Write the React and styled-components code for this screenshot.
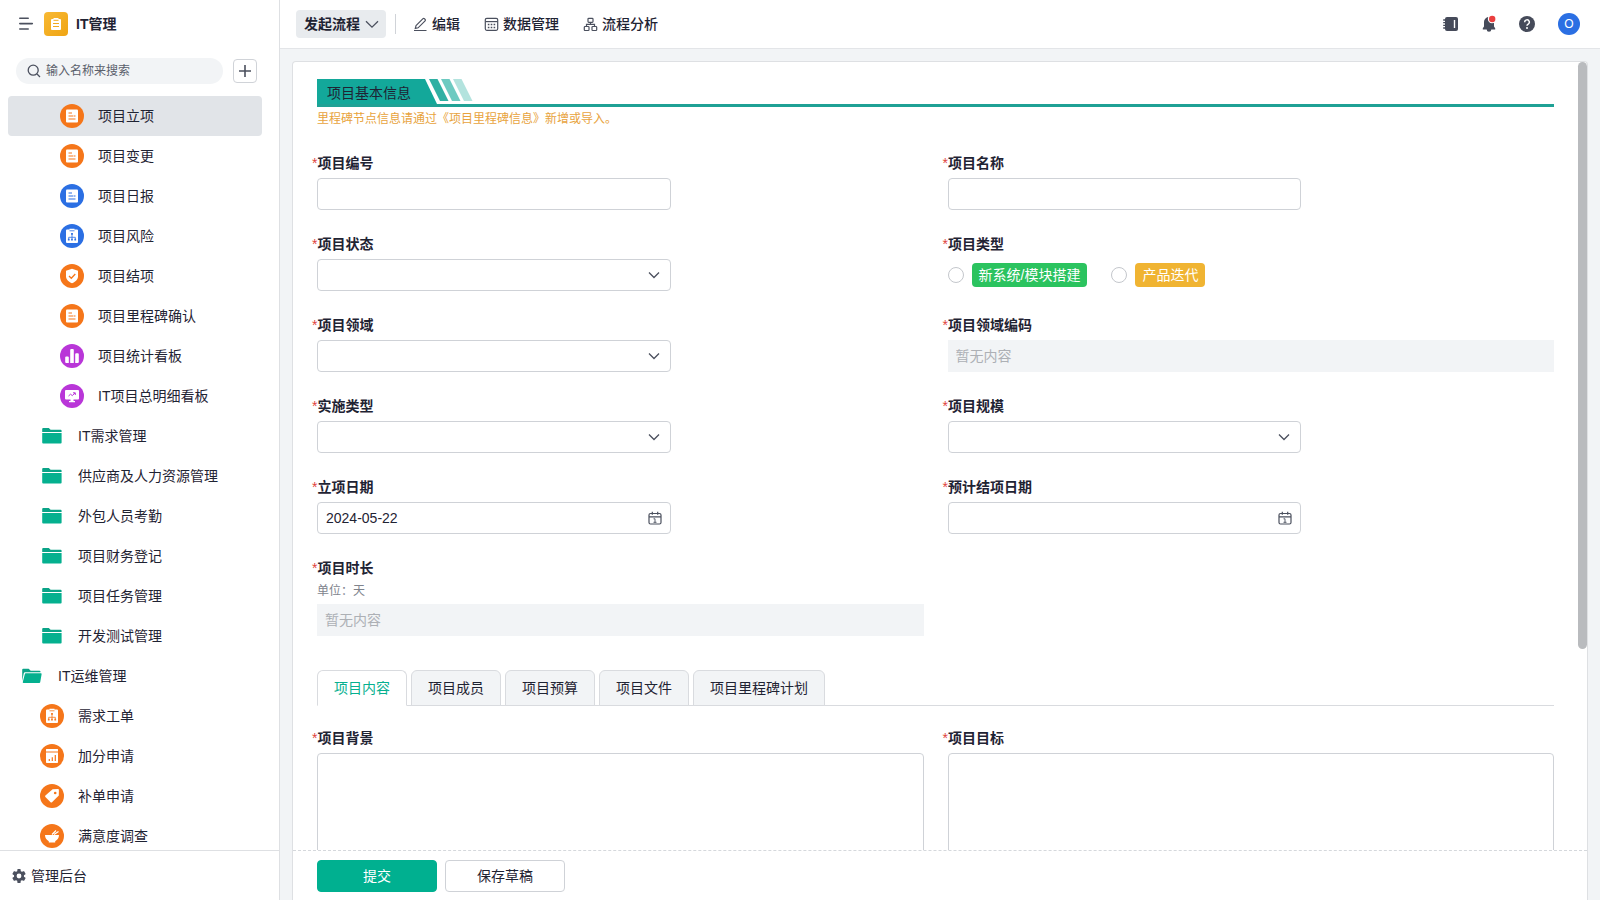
/* eslint-disable react/prop-types */
import * as React from 'react';
import styled, { createGlobalStyle } from 'styled-components';

const GlobalStyle = createGlobalStyle`
  * {
    box-sizing: border-box;
  }

  body {
    margin: 0;
    color: #1f2333;
    font-family: 'Liberation Sans', 'Noto Sans CJK SC', sans-serif;
    font-size: 14px;
    line-height: 22px;
  }

  button,
  input,
  select,
  textarea {
    font: inherit;
    color: inherit;
  }

  svg {
    display: block;
    flex-shrink: 0;
  }
`;

const Page = styled.div`
  display: flex;
  height: 100vh;
  overflow: hidden;
  background: #f2f4f6;
`;

// sidebar

const Sidebar = styled.aside`
  display: flex;
  flex-direction: column;
  flex-shrink: 0;
  width: 280px;
  border-right: 1px solid #dee0e3;
  background: white;
`;

const Brand = styled.div`
  display: flex;
  align-items: center;
  height: 48px;
  padding-left: 18px;
`;

const IconButton = styled.button`
  display: flex;
  align-items: center;
  justify-content: center;
  padding: 0;
  border: none;
  background: none;
  color: #4b505e;
`;

const Logo = styled.span`
  display: flex;
  align-items: center;
  justify-content: center;
  width: 24px;
  height: 24px;
  margin: 0 8px 0 10px;
  border-radius: 4px;
  background: linear-gradient(135deg, #f8b934, #efa413);
`;

const BrandName = styled.h1`
  margin: 0;
  font-size: 14px;
  font-weight: bold;
`;

const SearchRow = styled.div`
  display: flex;
  align-items: center;
  gap: 10px;
  padding: 10px 22px 12px 16px;
`;

const SearchBox = styled.label`
  display: flex;
  align-items: center;
  flex: 1;
  gap: 5px;
  height: 26px;
  min-width: 0;
  padding: 0 11px;
  border-radius: 13px;
  background: #f2f4f6;
  color: #4b505e;

  & > input {
    width: 100%;
    min-width: 0;
    padding: 0;
    border: none;
    outline: none;
    background: none;
    font-size: 12px;
  }

  & > input::placeholder {
    color: #5a5f6b;
    opacity: 1;
  }
`;

const AddButton = styled(IconButton)`
  width: 24px;
  height: 24px;
  border: 1px solid #d0d3d8;
  border-radius: 4px;
`;

const Menu = styled.nav`
  flex: 1;
  min-height: 0;
  overflow: hidden;
  padding: 0 17px 0 8px;
`;

const MenuItem = styled.a`
  display: flex;
  align-items: center;
  gap: 14px;
  height: 40px;
  padding-left: ${({ $level }) => $level * 20 - 8}px;
  border-radius: 4px;
  background: ${({ $active }) => ($active ? '#e1e4e8' : 'transparent')};
  color: inherit;
  text-decoration: none;
`;

const AdminLink = styled.a`
  display: flex;
  align-items: center;
  gap: 4px;
  height: 50px;
  padding: 0 11px;
  border-top: 1px solid #dee0e3;
  color: inherit;
  text-decoration: none;
`;

// top bar

const Main = styled.main`
  display: flex;
  flex-direction: column;
  flex: 1;
  min-width: 0;
`;

const TopBar = styled.header`
  display: flex;
  align-items: center;
  height: 49px;
  padding: 0 20px 0 16px;
  border-bottom: 1px solid #e3e5e8;
  background: white;
`;

const StartButton = styled.button`
  display: flex;
  align-items: center;
  gap: 5px;
  height: 28px;
  padding: 0 7px 0 8px;
  border: none;
  border-radius: 4px;
  background: #e8ebee;
  font-weight: bold;
`;

const Divider = styled.span`
  width: 1px;
  height: 20px;
  margin: 0 5px 0 9px;
  background: #d0d3d8;
`;

const BarButton = styled.button`
  display: flex;
  align-items: center;
  gap: 4px;
  padding: 0 12px;
  border: none;
  background: none;
  font-weight: 500;
`;

const BarTools = styled.div`
  display: flex;
  align-items: center;
  gap: 20px;
  margin-left: auto;
`;

const Avatar = styled.button`
  width: 22px;
  height: 22px;
  margin-left: 2px;
  padding: 0;
  border: none;
  border-radius: 50%;
  background: #2b6fe3;
  color: white;
  font-size: 12px;
`;

// form

const Card = styled.form`
  position: relative;
  display: flex;
  flex-direction: column;
  flex: 1;
  min-height: 0;
  margin: 12px 12px 0;
  border: 1px solid #dee0e3;
  border-bottom: none;
  border-radius: 4px 4px 0 0;
  background: white;
`;

const FormBody = styled.div`
  flex: 1;
  min-height: 0;
  overflow-y: auto;
  scrollbar-width: none;
  padding: 17px 33px 0 24px;
`;

const ScrollThumb = styled.div`
  position: absolute;
  top: 0;
  right: 0;
  width: 9px;
  height: 70%;
  border-radius: 5px;
  background: #b9bbbe;
`;

const Banner = styled.div`
  display: flex;
  height: 28px;
  border-bottom: 3px solid #1fa195;
`;

const BannerTitle = styled.h2`
  width: 120px;
  margin: 0 -8px 0 0;
  padding: 3px 0 0 10px;
  background: #13a89a;
  clip-path: polygon(0 0, 108px 0, 100% 100%, 0 100%);
  font-size: 14px;
  font-weight: normal;
`;

const Notice = styled.p`
  margin: 2px 0 23px;
  color: #e8a33d;
  font-size: 12px;
  line-height: 20px;
`;

const Fields = styled.div`
  display: grid;
  grid-template-columns: 1fr 1fr;
  gap: 23px 24px;
`;

const FieldBox = styled.div`
  display: flex;
  flex-direction: column;
  min-width: 0;
`;

const Label = styled.label`
  margin-bottom: ${({ $tight }) => ($tight ? 1 : 4)}px;
  margin-left: -5px;
  font-weight: bold;

  &::before {
    content: '*';
    color: #e0433c;
    font-weight: normal;
  }
`;

const Hint = styled.span`
  margin-bottom: 2px;
  color: #80848d;
  font-size: 12px;
`;

const InputWrap = styled.div`
  position: relative;
  width: calc(100% * 7 / 12);

  & > svg {
    position: absolute;
    top: 9px;
    right: 9px;
    color: #4b505e;
    pointer-events: none;
  }
`;

const TextInput = styled.input`
  display: block;
  width: 100%;
  height: 32px;
  padding: 0 8px;
  border: 1px solid #cfd2d7;
  border-radius: 4px;
  background: white;
`;

const Select = styled.select`
  display: block;
  appearance: none;
  width: 100%;
  height: 32px;
  padding: 0 8px;
  border: 1px solid #cfd2d7;
  border-radius: 4px;
  background: white;
`;

const EmptyInput = styled.input`
  height: 32px;
  padding: 0 8px;
  border: none;
  background: #f2f4f6;

  &::placeholder {
    color: #adb0b5;
    opacity: 1;
  }
`;

const TextArea = styled.textarea`
  height: 120px;
  padding: 8px;
  border: 1px solid #cfd2d7;
  border-radius: 4px;
  resize: none;
`;

const RadioGroup = styled.div`
  display: flex;
  align-items: center;
  gap: 24px;
  height: 32px;
`;

const RadioOption = styled.label`
  display: flex;
  align-items: center;
  gap: 8px;

  & > input {
    appearance: none;
    width: 16px;
    height: 16px;
    margin: 0;
    border: 1px solid #c4c7cc;
    border-radius: 50%;
  }
`;

const Tag = styled.span`
  height: 24px;
  padding: 0 7px;
  border-radius: 4px;
  background: ${({ $color }) => $color};
  color: white;
  line-height: 24px;
`;

const Tabs = styled.div`
  display: flex;
  gap: 4px;
  margin: 34px 0 21px;
  box-shadow: inset 0 -1px #d9dbdf;
`;

const Tab = styled.button`
  height: 36px;
  padding: 0 16px;
  border: 1px solid #d9dbdf;
  border-bottom-color: ${({ $active }) => ($active ? 'white' : '#d9dbdf')};
  border-radius: 6px 6px 0 0;
  background: ${({ $active }) => ($active ? 'white' : '#f2f4f6')};
  color: ${({ $active }) => ($active ? '#06b08f' : 'inherit')};
`;

const Actions = styled.footer`
  display: flex;
  gap: 8px;
  padding: 9px 24px 8px;
  border-top: 1px dashed #d5d8dc;
`;

const ActionButton = styled.button`
  width: 120px;
  height: 32px;
  border: 1px solid ${({ $primary }) => ($primary ? '#00b090' : '#cfd2d7')};
  border-radius: 4px;
  background: ${({ $primary }) => ($primary ? '#00b090' : 'white')};
  color: ${({ $primary }) => ($primary ? 'white' : 'inherit')};
`;

// glyphs inside the round menu icons, drawn in white on a 24px disc
const glyphs = {
  doc: (c) => (
    <>
      <rect x="6" y="5.5" width="12" height="13" rx="1" fill="white" />
      <path d="M8.5 9h3.5M8.5 12h4.5M8.5 15h7M13.5 12h2" stroke={c} strokeWidth="1.1" />
    </>
  ),
  chart: (c) => (
    <>
      <path d="M7 5.5h2.5v-.7h5v.7H17a1 1 0 0 1 1 1V18a1 1 0 0 1-1 1H7a1 1 0 0 1-1-1V6.500a1 1 0 0 1 1-1z" fill="white" />
      <path d="M9.500 6.800h5M12 10v5.500M8.700 15.500v-2.200h6.600v2.200" fill="none" stroke={c} strokeWidth=".8" />
      <path d="M11.100 9h1.800v1.800h-1.800zM7.900 14.800h1.700v1.700H7.900zM11.100 14.800h1.700v1.700h-1.700zM14.400 14.800h1.700v1.700h-1.700z" fill={c} />
    </>
  ),
  shield: (c) => (
    <>
      <path d="M12 4.800l6 2v5.400c0 3.400-2.600 5.600-6 7-3.400-1.400-6-3.600-6-7V6.800z" fill="white" />
      <path d="M9 12l2.300 2.300 4-4.300" fill="none" stroke={c} strokeWidth="1.300" />
    </>
  ),
  bars: () => (
    <path d="M6.200 12.500h1.600a1 1 0 0 1 1 1V19H6.200a1 1 0 0 1-1-1v-4.500a1 1 0 0 1 1-1zM11.200 5h1.600a1 1 0 0 1 1 1v13h-3.600V6a1 1 0 0 1 1-1zM16.200 9.300h1.600a1 1 0 0 1 1 1V18a1 1 0 0 1-1 1h-2.600v-8.700a1 1 0 0 1 1-1z" fill="white" />
  ),
  screen: (c) => (
    <>
      <rect x="5" y="6" width="14" height="9.500" rx="1" fill="white" />
      <path d="M10.500 15h3v2H15v1.200H9V17h1.500z" fill="white" />
      <path d="M8.500 12l2-1.800 1.800 1.400L15 9M13 8.800h2.300V11" fill="none" stroke={c} strokeWidth="1" />
    </>
  ),
  report: (c) => (
    <>
      <path d="M6.500 5h11a.5.5 0 0 1 .5.5v2H6v-2a.5.5 0 0 1 .5-.5zM6 8.500h12v9.700a.8.8 0 0 1-.8.8H6.800a.8.8 0 0 1-.8-.8z" fill="white" />
      <path d="M9.300 17v-2M12.300 17v-3.800M15.300 17v-6" stroke={c} strokeWidth="1.200" />
    </>
  ),
  tag: (c) => (
    <>
      <path d="M12.600 5.200l5.400-.1a.9.9 0 0 1 .9.900l-.1 5.400-6.800 6.800a1 1 0 0 1-1.400 0l-5.200-5.200a1 1 0 0 1 0-1.400z" fill="white" />
      <circle cx="15.200" cy="9" r="1.300" fill={c} />
    </>
  ),
  bowl: () => (
    <>
      <path d="M5 11h14c0 2.800-1.500 5-3.800 6.200v1.300H8.800v-1.300C6.500 16 5 13.800 5 11z" fill="white" />
      <path d="M12 10.500l4-4M14 10.500l4.500-3" stroke="white" strokeWidth="1.200" />
    </>
  ),
};

const colors = {
  orange: '#f5761a',
  blue: '#2b6fe3',
  purple: '#b936d8',
};

const AppIcon = ({ glyph, color }) => (
  <svg width="24" height="24" viewBox="0 0 24 24">
    <circle cx="12" cy="12" r="12" fill={colors[color]} />
    {glyphs[glyph](colors[color])}
  </svg>
);

const FolderIcon = ({ open }) => (
  <svg width="24" height="24" viewBox="0 0 24 24">
    {open ? (
      <>
        <path d="M2.200 17V5.800a1 1 0 0 1 1-1h5.500l2 1.900h8.800a1 1 0 0 1 1 1v.6H5.200a1.500 1.500 0 0 0-1.500 1.200z" fill="#0aa387" />
        <path d="M5.800 9.300h15a.8.8 0 0 1 .8 1l-1.400 8a1 1 0 0 1-1 .8H3.600a.8.8 0 0 1-.8-1l2-7.900a1.100 1.100 0 0 1 1-.9z" fill="#04b08f" />
      </>
    ) : (
      <>
        <path d="M2.200 7.900V5a1 1 0 0 1 1-1h5.600l1.800 1.700h10a1 1 0 0 1 1 1v1.200z" fill="#0aa387" />
        <path d="M2.200 8.900h19.400V18.500a1 1 0 0 1-1 1H3.200a1 1 0 0 1-1-1z" fill="#04b08f" />
      </>
    )}
  </svg>
);

const ChevronIcon = ({ small }) => (
  <svg width="14" height="14" viewBox="0 0 14 14" fill="none" stroke="#4b505e" strokeWidth="1.300">
    <path d={small ? 'M1 4.500l5 5 5-5' : 'M1 4.200l6 6 6-6'} />
  </svg>
);

const CalendarIcon = () => (
  <svg width="14" height="14" viewBox="0 0 14 14" fill="none" stroke="currentColor" strokeWidth="1.200">
    <rect x="1" y="2.500" width="12" height="10.500" rx="1.500" />
    <path d="M1 5.800h12M4.300.8v3M9.700.8v3" />
    <path d="M5.500 7.800H7v3.700M5.500 11.300h3" strokeWidth=".9" />
  </svg>
);

const menu = [
  { text: '项目立项', level: 3, glyph: 'doc', color: 'orange', active: true },
  { text: '项目变更', level: 3, glyph: 'doc', color: 'orange' },
  { text: '项目日报', level: 3, glyph: 'doc', color: 'blue' },
  { text: '项目风险', level: 3, glyph: 'chart', color: 'blue' },
  { text: '项目结项', level: 3, glyph: 'shield', color: 'orange' },
  { text: '项目里程碑确认', level: 3, glyph: 'doc', color: 'orange' },
  { text: '项目统计看板', level: 3, glyph: 'bars', color: 'purple' },
  { text: 'IT项目总明细看板', level: 3, glyph: 'screen', color: 'purple' },
  { text: 'IT需求管理', level: 2 },
  { text: '供应商及人力资源管理', level: 2 },
  { text: '外包人员考勤', level: 2 },
  { text: '项目财务登记', level: 2 },
  { text: '项目任务管理', level: 2 },
  { text: '开发测试管理', level: 2 },
  { text: 'IT运维管理', level: 1, open: true },
  { text: '需求工单', level: 2, glyph: 'chart', color: 'orange' },
  { text: '加分申请', level: 2, glyph: 'report', color: 'orange' },
  { text: '补单申请', level: 2, glyph: 'tag', color: 'orange' },
  { text: '满意度调查', level: 2, glyph: 'bowl', color: 'orange' },
];

const fields = [
  { id: 'code', label: '项目编号', type: 'text' },
  { id: 'name', label: '项目名称', type: 'text' },
  { id: 'status', label: '项目状态', type: 'select' },
  { id: 'kind', label: '项目类型', type: 'radio' },
  { id: 'domain', label: '项目领域', type: 'select' },
  { id: 'domainCode', label: '项目领域编码', type: 'empty' },
  { id: 'impl', label: '实施类型', type: 'select' },
  { id: 'scale', label: '项目规模', type: 'select' },
  { id: 'startDate', label: '立项日期', type: 'date', value: '2024-05-22' },
  { id: 'endDate', label: '预计结项日期', type: 'date' },
  { id: 'duration', label: '项目时长', type: 'empty', hint: '单位：天' },
];

const kinds = [
  { text: '新系统/模块搭建', color: '#2bc35f' },
  { text: '产品迭代', color: '#f0b432' },
];

const tabs = ['项目内容', '项目成员', '项目预算', '项目文件', '项目里程碑计划'];

const Control = ({ field }) => {
  const { id, type, value } = field;
  if (type === 'radio') {
    return (
      <RadioGroup role="radiogroup" aria-labelledby={`${id}-label`}>
        {kinds.map((kind) => (
          <RadioOption key={kind.text}>
            <input type="radio" name={id} />
            <Tag $color={kind.color}>{kind.text}</Tag>
          </RadioOption>
        ))}
      </RadioGroup>
    );
  }
  if (type === 'empty') {
    return <EmptyInput id={id} placeholder="暂无内容" readOnly />;
  }
  if (type === 'select') {
    return (
      <InputWrap>
        <Select id={id} />
        <ChevronIcon small />
      </InputWrap>
    );
  }
  return (
    <InputWrap>
      <TextInput id={id} type="text" defaultValue={value} />
      {type === 'date' && <CalendarIcon />}
    </InputWrap>
  );
};

const Field = ({ field }) => (
  <FieldBox>
    <Label
      as={field.type === 'radio' ? 'span' : 'label'}
      id={`${field.id}-label`}
      htmlFor={field.type === 'radio' ? undefined : field.id}
      $tight={Boolean(field.hint)}
    >
      {field.label}
    </Label>
    {field.hint && <Hint>{field.hint}</Hint>}
    <Control field={field} />
  </FieldBox>
);

const SideMenu = () => (
  <Sidebar>
    <Brand>
      <IconButton type="button" aria-label="收起">
        <svg width="16" height="16" viewBox="0 0 16 16" stroke="currentColor" strokeWidth="1.600" strokeLinecap="round">
          <path d="M1.800 2.300h8.400M1.800 7.600h12.500M1.800 13h8.400" />
        </svg>
      </IconButton>
      <Logo>
        <svg width="14" height="14" viewBox="0 0 14 14">
          <path d="M3 2h1.500V1h5v1H11a1 1 0 0 1 1 1v9a1 1 0 0 1-1 1H3a1 1 0 0 1-1-1V3a1 1 0 0 1 1-1z" fill="white" />
          <path d="M4.500 3.300h5M4 6.500h6M4 9.500h6" stroke="#f1aa20" strokeWidth="1" />
        </svg>
      </Logo>
      <BrandName>IT管理</BrandName>
    </Brand>
    <SearchRow>
      <SearchBox>
        <svg width="14" height="14" viewBox="0 0 14 14" fill="none" stroke="currentColor" strokeWidth="1.300">
          <circle cx="6.200" cy="6.200" r="5" />
          <path d="M10 10l3 3" />
        </svg>
        <input type="text" placeholder="输入名称来搜索" aria-label="搜索" />
      </SearchBox>
      <AddButton type="button" aria-label="新增">
        <svg width="14" height="14" viewBox="0 0 14 14" stroke="currentColor" strokeWidth="1.600">
          <path d="M7 1v12M1 7h12" />
        </svg>
      </AddButton>
    </SearchRow>
    <Menu>
      {menu.map((item) => (
        <MenuItem key={item.text} href="#" $level={item.level} $active={item.active}>
          {item.glyph ? (
            <AppIcon glyph={item.glyph} color={item.color} />
          ) : (
            <FolderIcon open={item.open} />
          )}
          {item.text}
        </MenuItem>
      ))}
    </Menu>
    <AdminLink href="#">
      <svg width="16" height="16" viewBox="0 0 24 24" fill="#4b505e">
        <path d="M19.400 13a7.700 7.700 0 0 0 0-2l2.300-1.700a.6.600 0 0 0 .1-.7l-2.100-3.700a.6.600 0 0 0-.7-.2l-2.600 1a8 8 0 0 0-1.700-1l-.4-2.800a.6.600 0 0 0-.6-.4h-3.400a.6.600 0 0 0-.6.400l-.4 2.800a8 8 0 0 0-1.700 1l-2.600-1a.6.600 0 0 0-.7.200L2.200 8.600a.6.600 0 0 0 .1.700L4.600 11a7.700 7.700 0 0 0 0 2l-2.300 1.700a.6.600 0 0 0-.1.700l2.100 3.700c.1.200.4.300.7.200l2.600-1a8 8 0 0 0 1.700 1l.4 2.800c0 .2.300.4.600.4h3.400c.3 0 .6-.2.600-.4l.4-2.800a8 8 0 0 0 1.700-1l2.600 1c.3.100.6 0 .7-.2l2.100-3.700a.6.600 0 0 0-.1-.7zM12 15.600a3.600 3.600 0 1 1 0-7.200 3.600 3.600 0 0 1 0 7.200z" />
      </svg>
      管理后台
    </AdminLink>
  </Sidebar>
);

const Header = () => (
  <TopBar>
    <StartButton type="button">
      发起流程
      <ChevronIcon />
    </StartButton>
    <Divider />
    <BarButton type="button">
      <svg width="15" height="15" viewBox="0 0 15 15" fill="none" stroke="#4b505e" strokeWidth="1.200">
        <path d="M3 8.700L10 1.700a1 1 0 0 1 1.400 0l.7.700a1 1 0 0 1 0 1.400l-7 7-2.800.6zM1 13.500h12.500" />
      </svg>
      编辑
    </BarButton>
    <BarButton type="button">
      <svg width="15" height="15" viewBox="0 0 15 15" fill="none" stroke="#4b505e" strokeWidth="1.200">
        <rect x="1.300" y="1.300" width="12.400" height="12" rx="1.500" />
        <path d="M1.500 4.600h12" />
        <path d="M3.800 7.500h7.400M3.800 10.500h7.400" strokeDasharray="1.600 1.300" strokeWidth="1.500" />
      </svg>
      数据管理
    </BarButton>
    <BarButton type="button">
      <svg width="15" height="15" viewBox="0 0 15 15" fill="none" stroke="#4b505e" strokeWidth="1.200">
        <rect x="5" y="1.300" width="5" height="4" rx=".8" />
        <rect x="1.300" y="9.500" width="4.700" height="4" rx=".8" />
        <rect x="9" y="9.500" width="4.700" height="4" rx=".8" />
        <path d="M7.500 5.300v2.100M3.500 9.500V7.400h8v2.100" />
      </svg>
      流程分析
    </BarButton>
    <BarTools>
      <IconButton type="button" aria-label="通讯录">
        <svg width="18" height="18" viewBox="0 0 18 18">
          <rect x="3" y="2" width="13" height="14" rx="2" fill="#464b5a" />
          <path d="M1.200 5h2.500M1.200 7.700h2.500M1.200 10.400h2.500M1.200 13h2.500" stroke="#464b5a" strokeWidth="1.300" />
          <path d="M12.500 5v8" stroke="white" strokeWidth="1.400" />
        </svg>
      </IconButton>
      <IconButton type="button" aria-label="消息">
        <svg width="18" height="18" viewBox="0 0 18 18">
          <path d="M9 2a5 5 0 0 0-5 5v4.500l-1.200 1.700v1.300h3.900a2.300 2.300 0 0 0 4.600 0h3.900v-1.300L14 11.500V7a5 5 0 0 0-5-5z" fill="#464b5a" />
          <circle cx="12" cy="4" r="4.200" fill="white" />
          <circle cx="12.200" cy="4" r="3.200" fill="#ea3f3f" />
        </svg>
      </IconButton>
      <IconButton type="button" aria-label="帮助">
        <svg width="18" height="18" viewBox="0 0 18 18" fill="none">
          <circle cx="9" cy="9" r="8" fill="#464b5a" />
          <path d="M6.700 7.200a2.300 2.300 0 1 1 3.500 1.900c-.8.500-1.200.8-1.200 1.700" stroke="white" strokeWidth="1.500" />
          <circle cx="9" cy="12.900" r="1" fill="white" />
        </svg>
      </IconButton>
      <Avatar type="button">O</Avatar>
    </BarTools>
  </TopBar>
);

const App = () => {
  return (
    <Page>
      <GlobalStyle />
      <SideMenu />
      <Main>
        <Header />
        <Card>
          <FormBody>
            <Banner>
              <BannerTitle>项目基本信息</BannerTitle>
              <svg width="44" height="22" viewBox="0 0 44 22">
                <path d="M0 0h8.500l11 22h-8.500z" fill="#2fb0a3" />
                <path d="M12 0h8.500l11 22h-8.500z" fill="#6dcac1" />
                <path d="M24 0h8.500l11 22h-8.500z" fill="#b3e3de" />
              </svg>
            </Banner>
            <Notice>里程碑节点信息请通过《项目里程碑信息》新增或导入。</Notice>
            <Fields>
              {fields.map((field) => (
                <Field key={field.id} field={field} />
              ))}
            </Fields>
            <Tabs role="tablist">
              {tabs.map((tab, i) => (
                <Tab key={tab} type="button" role="tab" aria-selected={i === 0} $active={i === 0}>
                  {tab}
                </Tab>
              ))}
            </Tabs>
            <Fields>
              <FieldBox>
                <Label htmlFor="background">项目背景</Label>
                <TextArea id="background" />
              </FieldBox>
              <FieldBox>
                <Label htmlFor="goal">项目目标</Label>
                <TextArea id="goal" />
              </FieldBox>
            </Fields>
          </FormBody>
          <Actions>
            <ActionButton type="submit" $primary>
              提交
            </ActionButton>
            <ActionButton type="button">保存草稿</ActionButton>
          </Actions>
          <ScrollThumb />
        </Card>
      </Main>
    </Page>
  );
};

export default App;
